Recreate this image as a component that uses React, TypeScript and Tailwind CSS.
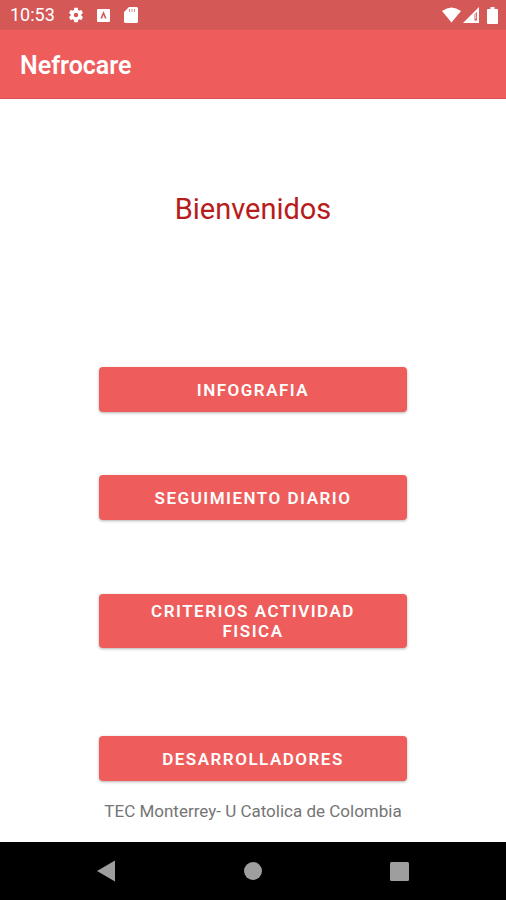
import type { ReactNode } from "react";

function StatusBar() {
  return (
    <div className="flex h-[30px] items-center bg-[#d45856] pl-[10px] pr-2 text-white">
      <span className="w-[57px] text-[18px] leading-8">10:53</span>
      <svg className="size-[18px]" viewBox="0 0 24 24" fill="currentColor" aria-hidden="true">
        <path d="M19.14 12.94c.04-.3.06-.61.06-.94 0-.32-.02-.64-.07-.94l2.03-1.58a.49.49 0 0 0 .12-.61l-1.92-3.32a.488.488 0 0 0-.59-.22l-2.39.96c-.5-.38-1.03-.7-1.62-.94l-.36-2.54a.484.484 0 0 0-.48-.41h-3.84c-.24 0-.43.17-.47.41l-.36 2.54c-.59.24-1.13.57-1.62.94l-2.39-.96c-.22-.08-.47 0-.59.22L2.74 8.87c-.12.21-.08.47.12.61l2.03 1.58c-.05.3-.09.63-.09.94s.02.64.07.94l-2.03 1.58a.49.49 0 0 0-.12.61l1.92 3.32c.12.22.37.29.59.22l2.39-.96c.5.38 1.03.7 1.62.94l.36 2.54c.05.24.24.41.48.41h3.84c.24 0 .44-.17.47-.41l.36-2.54c.59-.24 1.13-.56 1.62-.94l2.39.96c.22.08.47 0 .59-.22l1.92-3.32c.12-.22.07-.47-.12-.61l-2.01-1.58zM12 15a3 3 0 1 1 0-6 3 3 0 0 1 0 6z" />
      </svg>
      <svg className="ml-3 size-[13px]" viewBox="0 0 13 13" aria-hidden="true">
        <rect width="13" height="13" rx="1" fill="#fff" />
        <path d="M4.200 9.500 6.500 4 8.800 9.500" fill="none" stroke="#d45856" strokeWidth="1.600" />
      </svg>
      <svg className="ml-[14px] h-4 w-[14px]" viewBox="0 0 14 16" aria-hidden="true">
        <path d="M5 0h7.500Q14 0 14 1.500v13Q14 16 12.500 16h-11Q0 16 0 14.500V5z" fill="#fff" />
        <path d="M5.500 2v3M8 2v3M10.500 2v3" stroke="#d45856" strokeWidth="1" opacity="0.7" />
      </svg>
      <svg className="ml-auto h-4 w-[19px]" viewBox="0 0 19 16" aria-hidden="true">
        <path d="M9.500 15.500 0 4Q9.500-3 19 4z" fill="#fff" />
      </svg>
      <svg className="ml-[2px] h-4 w-4" viewBox="0 0 16 16" aria-hidden="true">
        <path d="M0 16 16 0v16z" fill="#fff" />
        <path d="M11.500 7.500 14 5v8.500h-2.500z" fill="#d45856" />
        <path d="M12.700 7v5" stroke="#fff" strokeWidth="0.800" />
      </svg>
      <svg className="ml-2 h-[17px] w-[11px]" viewBox="0 0 11 17" fill="#fff" aria-hidden="true">
        <path d="M3.500 0h4v2H10q1 0 1 1v13q0 1-1 1H1q-1 0-1-1V3q0-1 1-1h2.500z" />
      </svg>
    </div>
  );
}

function MenuButton({ children }: { children: ReactNode }) {
  return (
    <button
      type="button"
      className="min-h-[45px] w-[61%] rounded bg-[#ee5c5b] px-5 py-[7px] text-[17px] leading-5 font-semibold tracking-[1.5px] text-white uppercase shadow-[0_1px_3px_rgba(0,0,0,0.3)]"
    >
      {children}
    </button>
  );
}

function NavigationBar() {
  return (
    <nav className="grid h-[58px] grid-cols-3 bg-black px-[33px] text-[#9e9e9e]">
      <button type="button" aria-label="Back" className="flex items-center justify-center">
        <svg className="h-[22px] w-[18px]" viewBox="0 0 18 22" fill="currentColor">
          <path d="M0 11 18 0.500v21z" />
        </svg>
      </button>
      <button type="button" aria-label="Home" className="flex items-center justify-center">
        <svg className="size-[18px]" viewBox="0 0 18 18" fill="currentColor">
          <circle cx="9" cy="9" r="9" />
        </svg>
      </button>
      <button type="button" aria-label="Recent apps" className="flex items-center justify-center">
        <svg className="size-[19px]" viewBox="0 0 19 19" fill="currentColor">
          <rect width="19" height="19" rx="1.500" />
        </svg>
      </button>
    </nav>
  );
}

export default function App() {
  return (
    <div className="flex min-h-screen flex-col bg-white font-['Roboto',sans-serif]">
      <StatusBar />
      <header className="flex h-[69px] items-center border-b border-[#d95553] bg-[#ee5c5b] px-5 pt-1">
        <h1 className="text-[25px] leading-8 font-semibold text-white">Nefrocare</h1>
      </header>
      <main className="flex flex-1 flex-col items-center pt-[90px]">
        <h2 className="mb-[138px] text-[29px] leading-10 text-[#b71c1c]">Bienvenidos</h2>
        <div className="flex w-full flex-col items-center">
          <MenuButton>Infografia</MenuButton>
          <div className="mt-[63px] flex w-full justify-center">
            <MenuButton>Seguimiento diario</MenuButton>
          </div>
          <div className="mt-[74px] flex w-full justify-center">
            <MenuButton>Criterios actividad fisica</MenuButton>
          </div>
          <div className="mt-[88px] flex w-full justify-center">
            <MenuButton>Desarrolladores</MenuButton>
          </div>
        </div>
        <p className="mt-5 text-[17px] leading-5 text-[#757575]">
          TEC Monterrey- U Catolica de Colombia
        </p>
      </main>
      <NavigationBar />
    </div>
  );
}
